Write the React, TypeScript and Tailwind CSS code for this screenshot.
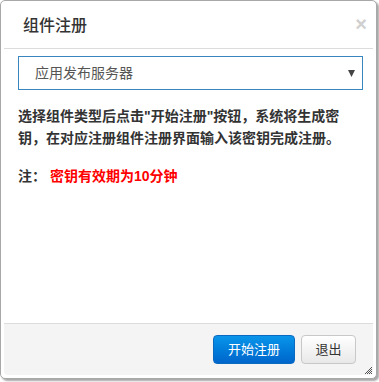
import React from 'react';

const font = { fontFamily: '"Liberation Sans", "Noto Sans CJK SC", sans-serif' };

const ResizeGrip: React.FC = () => (
  <svg className="absolute right-[3px] bottom-[3px]" width="9" height="9" viewBox="0 0 9 9">
    <path d="M8 1 L1 8 M8 3 L3 8 M8 5 L5 8 M8 7 L7 8" stroke="#555" strokeWidth="1" />
  </svg>
);

const App: React.FC = () => {
  return (
    <div className="bg-white w-[379px] h-[382px]" style={font}>
      <div className="relative w-[377px] h-[379px] border border-[#a8a8a8] rounded-[5px] shadow-[2px_2px_2px_rgba(0,0,0,0.35)] bg-white p-[3px] flex flex-col">
        <div className="h-[45px] border-b border-[#dcdcdc] flex items-center justify-between pl-[19px] pr-[6px]">
          <span className="text-[16px] font-medium text-[#333]">组件注册</span>
          <span className="text-[20px] font-bold leading-none text-[#d0d0d0] -mt-[4px]">×</span>
        </div>

        <div className="flex-1 pl-[14px] pr-[10px] pt-[7px]">
          <div className="h-[34px] border border-[#3a87c0] flex items-center justify-between pl-[16px] pr-[7px]">
            <span className="text-[14px] text-[#555]">应用发布服务器</span>
            <svg width="7" height="7" viewBox="0 0 7 7">
              <path d="M0 0 H7 L3.5 7 Z" fill="#444" />
            </svg>
          </div>
          <p className="mt-[15px] pr-[14px] text-[14px] font-bold leading-[22px] text-[#333]">
            选择组件类型后点击"开始注册"按钮，系统将生成密钥，在对应注册组件注册界面输入该密钥完成注册。
          </p>
          <p className="mt-[16px] text-[14px] font-bold leading-[22px] text-[#333]">
            注：<span className="ml-[4px] text-[#ff0000]">密钥有效期为10分钟</span>
          </p>
        </div>

        <div className="h-[52px] border-t border-[#dcdcdc] bg-[#f4f4f4] rounded-b-[4px] flex items-center justify-end gap-[6px] pr-[17px]">
          <button className="w-[82px] h-[29px] rounded-[4px] border border-[#0a6ac2] bg-gradient-to-b from-[#0b95ea] to-[#0065cb] text-white text-[13px]">
            开始注册
          </button>
          <button className="w-[55px] h-[29px] rounded-[4px] border border-[#c8c8c8] bg-gradient-to-b from-white to-[#e8e8e8] text-[#333] text-[13px]">
            退出
          </button>
        </div>

        <ResizeGrip />
      </div>
    </div>
  );
};

export default App;
